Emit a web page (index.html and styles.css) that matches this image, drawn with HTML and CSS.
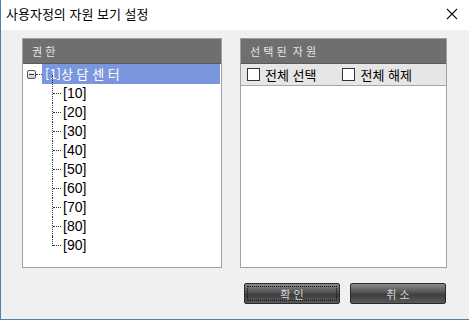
FILE: index.html
```html
<!DOCTYPE html>
<html lang="ko">
<head>
    <meta charset="UTF-8">
    <title>사용자정의 자원 보기 설정</title>
    <link rel="stylesheet" href="styles.css">
</head>
<body>
    <div class="window">
        <div class="title-bar">
            <span class="title">사용자정의 자원 보기 설정</span>
            <svg class="close" width="12" height="12" viewBox="0 0 12 12">
                <path d="M1 1 L11 11 M11 1 L1 11" stroke="#111111" stroke-width="1.1" fill="none"/>
            </svg>
        </div>
        <div class="content">
            <div class="panels">
                <div class="panel tree-panel">
                    <div class="panel-header">권 한</div>
                    <div class="tree">
                        <div class="tree-root">
                            <span class="toggle"></span>
                            <span class="root-dots"></span>
                            <span class="root-label">[1]상 담 센 터</span>
                        </div>
                        <ul class="tree-children">
                            <li>[10]</li>
                            <li>[20]</li>
                            <li>[30]</li>
                            <li>[40]</li>
                            <li>[50]</li>
                            <li>[60]</li>
                            <li>[70]</li>
                            <li>[80]</li>
                            <li class="last">[90]</li>
                        </ul>
                    </div>
                </div>
                <div class="panel select-panel">
                    <div class="panel-header">선 택 된  자 원</div>
                    <div class="check-row">
                        <label class="check"><span class="box"></span>전체 선택</label>
                        <label class="check"><span class="box"></span>전체 해제</label>
                    </div>
                    <div class="list"></div>
                </div>
            </div>
            <div class="buttons">
                <button class="btn focused"><span>확 인</span></button>
                <button class="btn"><span>취 소</span></button>
            </div>
        </div>
    </div>
</body>
</html>
```
FILE: styles.css
```css
body {
    margin: 0;
    padding: 0;
    font-family: "Noto Sans CJK KR", "Liberation Sans", sans-serif;
    background: #ffffff;
}

.window {
    width: 469px;
    height: 320px;
    border-left: 1px solid #4f7db8;
    border-bottom: 1px solid #4f7db8;
    box-sizing: border-box;
    display: flex;
    flex-direction: column;
}

.title-bar {
    height: 30px;
    background: #ffffff;
    display: flex;
    align-items: center;
    justify-content: space-between;
    padding: 0 11px 0 5px;
    box-sizing: border-box;
}

.title {
    font-size: 13px;
    color: #000000;
    position: relative;
    top: -2px;
}

.close {
    position: relative;
    top: -1px;
}

.content {
    flex: 1;
    background: #f0f0f0;
    padding: 8px 21px 0 21px;
    display: flex;
    flex-direction: column;
}

.panels {
    display: flex;
    gap: 18px;
    height: 230px;
}

.panel {
    border: 1px solid #a0a0a0;
    background: #ffffff;
    display: flex;
    flex-direction: column;
    box-sizing: border-box;
}

.tree-panel {
    width: 200px;
}

.select-panel {
    width: 207px;
}

.panel-header {
    height: 24px;
    background: #6f6f6f;
    border-bottom: 1px solid #5a5a5a;
    color: #e6e6e6;
    font-size: 11px;
    line-height: 24px;
    padding-left: 9px;
    white-space: pre;
}

.tree-root {
    display: flex;
    align-items: center;
    height: 20px;
    padding-left: 4px;
}

.toggle {
    width: 7px;
    height: 7px;
    border: 1px solid #555555;
    border-radius: 2px;
    background: linear-gradient(#ffffff, #c8c8c8);
    position: relative;
}

.toggle::after {
    content: "";
    position: absolute;
    left: 1px;
    top: 3px;
    width: 5px;
    height: 1px;
    background: #1a3a80;
}

.root-dots {
    width: 6px;
    border-top: 1px dotted #333333;
}

.root-label {
    flex: 1;
    background: #7a97dd;
    color: #ffffff;
    font-size: 13px;
    line-height: 20px;
    padding-left: 3px;
    margin-right: 1px;
}

.tree-children {
    list-style: none;
    margin: 0;
    padding: 0 0 0 29px;
}

.tree-children li {
    position: relative;
    height: 19px;
    line-height: 19px;
    font-size: 14px;
    color: #000000;
    padding-left: 11px;
    font-family: "Liberation Sans", sans-serif;
}

.tree-children li::before {
    content: "";
    position: absolute;
    left: 0;
    top: 0;
    height: 19px;
    border-left: 1px dotted #333333;
}

.tree-children li:first-child::before {
    top: -9px;
    height: 28px;
}

.tree-children li.last::before {
    height: 10px;
}

.tree-children li::after {
    content: "";
    position: absolute;
    left: 1px;
    top: 9px;
    width: 8px;
    border-top: 1px dotted #333333;
}

.check-row {
    height: 21px;
    background: #e6e6e6;
    border-bottom: 1px solid #a8a8a8;
    display: flex;
    align-items: center;
    padding-left: 6px;
    gap: 26px;
}

.check {
    display: flex;
    align-items: center;
    font-size: 13px;
    color: #000000;
}

.box {
    width: 11px;
    height: 11px;
    border: 1px solid #333333;
    background: #ffffff;
    margin-right: 5px;
}

.list {
    flex: 1;
}

.buttons {
    display: flex;
    justify-content: flex-end;
    gap: 10px;
    margin-top: 15px;
    padding-right: 2px;
}

.btn {
    width: 96px;
    height: 21px;
    padding: 2px;
    border: 1px solid #2a2a2a;
    border-radius: 2px;
    background: linear-gradient(#8a8a8a, #4a4a4a 50%, #3a3a3a 51%, #5a5a5a);
    color: #d8d8d8;
    font-family: "Noto Sans CJK KR", sans-serif;
    font-size: 11px;
    box-sizing: border-box;
}

.btn span {
    display: flex;
    align-items: center;
    justify-content: center;
    height: 100%;
    box-sizing: border-box;
    border: 1px dotted transparent;
}

.btn.focused span {
    border-color: #111111;
}
```
